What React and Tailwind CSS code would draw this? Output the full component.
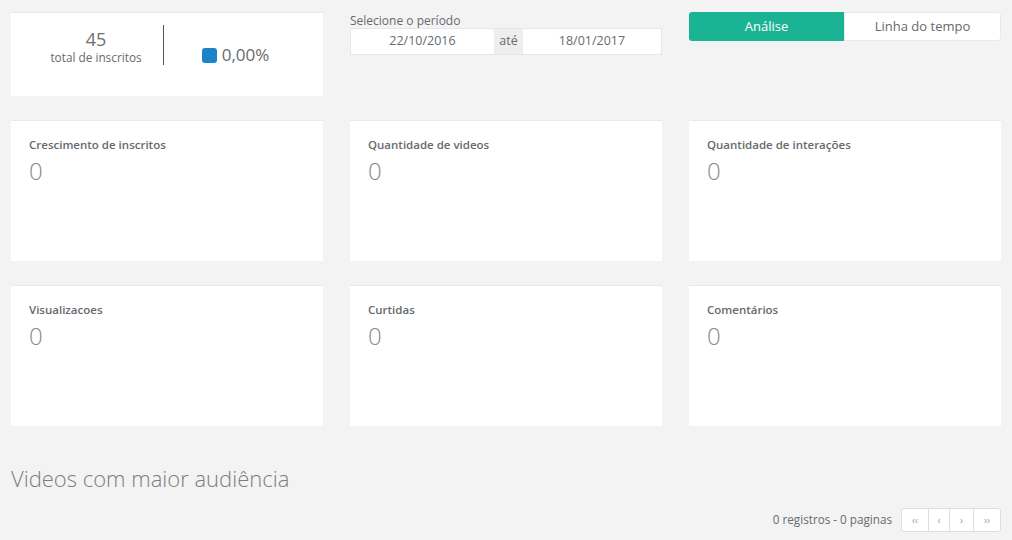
import React from "react";

const stats = [
  ["Crescimento de inscritos", "Quantidade de videos", "Quantidade de interações"],
  ["Visualizacoes", "Curtidas", "Comentários"],
];

const StatCard = ({ title }) => (
  <div className="bg-white border-t border-[#e7eaec] h-[141px] px-[18px] pt-[16px]">
    <h5 className="text-[11.5px] font-semibold text-[#676a6c] leading-[16px]">{title}</h5>
    <div className="text-[24px] font-light text-[#8a8a8a] leading-[26px] mt-[5px]">0</div>
  </div>
);

export default function App() {
  return (
    <div
      className="min-h-[540px] bg-[#f3f3f4] px-[11px] pt-[12px] text-[#676a6c]"
      style={{ fontFamily: '"Open Sans", "Liberation Sans", sans-serif' }}
    >
      {/* top row */}
      <div className="grid grid-cols-3 gap-x-[27px]">
        <div className="bg-white border-t border-[#e7eaec] h-[84px] flex items-center">
          <div className="w-[152px] pl-[18px] flex flex-col items-center -mt-[18px]">
            <span className="text-[18px] leading-[22px] text-[#6d6f71]">45</span>
            <span className="text-[11.8px] leading-[14px] text-[#676a6c]">total de inscritos</span>
          </div>
          <div className="w-px h-[40px] bg-[#555] -mt-[19px]" />
          <div className="flex-1 flex items-center justify-center gap-[5px] pr-[16px] mt-[1px]">
            <span className="w-[15px] h-[15px] rounded-[3px] bg-[#1c84c6]" />
            <span className="text-[17px] leading-[20px] text-[#676a6c]">0,00%</span>
          </div>
        </div>

        <div className="pt-[1px]">
          <label className="block text-[12px] leading-[15px] text-[#676a6c]">Selecione o período</label>
          <div className="flex h-[27px] border border-[#e5e6e7] bg-white text-[12.5px] text-[#676a6c]">
            <div className="w-[143px] flex items-center justify-center">22/10/2016</div>
            <div className="w-[29px] bg-[#eeeeee] flex items-center justify-center">até</div>
            <div className="flex-1 flex items-center justify-center">18/01/2017</div>
          </div>
        </div>

        <div className="flex h-[29px] text-[13px]">
          <button className="w-[155px] bg-[#1ab394] text-white rounded-l-[3px]">Análise</button>
          <button className="flex-1 bg-white text-[#676a6c] border border-[#e7eaec] rounded-r-[3px]">
            Linha do tempo
          </button>
        </div>
      </div>

      {/* stat rows */}
      {stats.map((row, i) => (
        <div key={i} className="grid grid-cols-3 gap-x-[27px] mt-[24px]">
          {row.map((t) => (
            <StatCard key={t} title={t} />
          ))}
        </div>
      ))}

      {/* videos */}
      <h2 className="mt-[38px] text-[22px] font-light text-[#7d7d7d] leading-[28px]">Videos com maior audiência</h2>
      <div className="flex justify-end items-center gap-[9px] mt-[16px]">
        <span className="text-[11.7px] text-[#676a6c]">0 registros - 0 paginas</span>
        <div className="flex h-[24px] border border-[#dddddd] rounded-[3px] bg-white text-[10px] text-[#8aa0c0]">
          <span className="w-[27px] flex items-center justify-center border-r border-[#dddddd]">‹‹</span>
          <span className="w-[21px] flex items-center justify-center border-r border-[#dddddd]">‹</span>
          <span className="w-[24px] flex items-center justify-center border-r border-[#dddddd]">›</span>
          <span className="w-[26px] flex items-center justify-center">››</span>
        </div>
      </div>
    </div>
  );
}
